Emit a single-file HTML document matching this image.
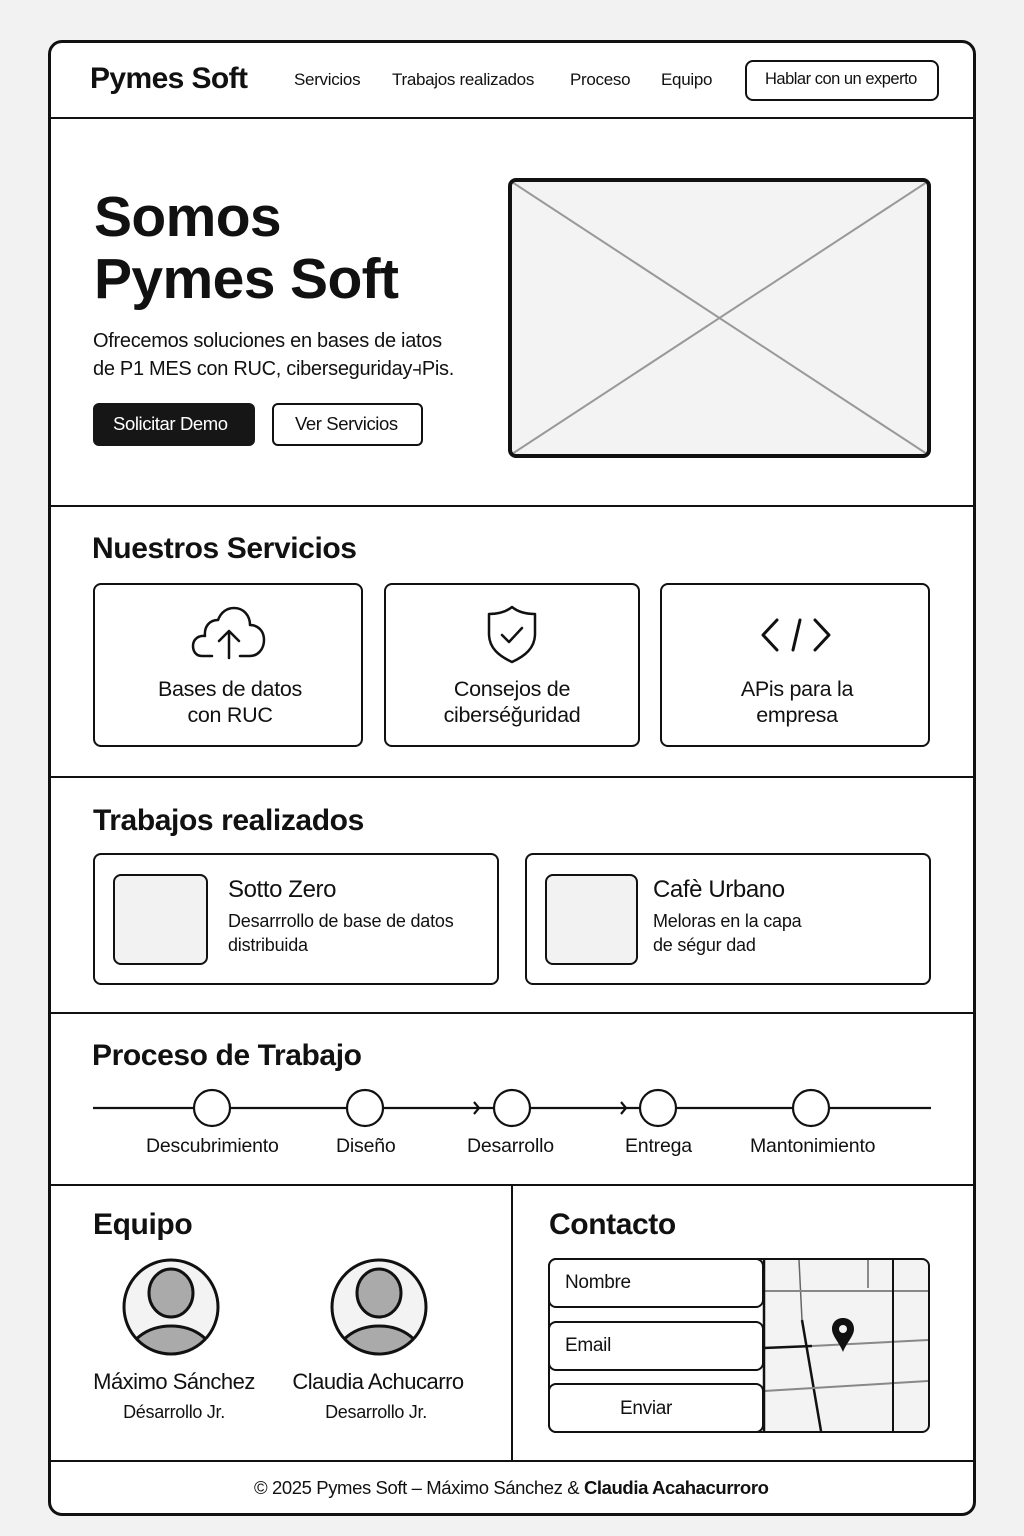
<!DOCTYPE html>
<html><head><meta charset="utf-8"><style>
*{margin:0;padding:0;box-sizing:border-box}
body{width:1024px;height:1536px;background:#f2f2f2;font-family:"Liberation Sans",sans-serif;color:#111;position:relative;overflow:hidden}
.a{position:absolute}
.frame{left:48px;top:40px;width:928px;height:1476px;border:3px solid #111;border-radius:14px;background:#fff}
.hl{position:absolute;left:48px;width:928px;height:2px;background:#111}
.t{position:absolute;white-space:nowrap;letter-spacing:-0.3px}
.box{position:absolute;border:2px solid #111;border-radius:8px;background:#fff}
.c{text-align:center}
.h{font-size:30px;font-weight:bold;letter-spacing:-0.4px}
</style></head><body>
<div class="a frame"></div>
<div class="hl" style="top:117px"></div>
<div class="hl" style="top:505px"></div>
<div class="hl" style="top:776px"></div>
<div class="hl" style="top:1012px"></div>
<div class="hl" style="top:1184px"></div>
<div class="hl" style="top:1460px"></div>
<div class="a" style="left:511px;top:1185px;width:2px;height:276px;background:#111"></div>

<!-- header -->
<div class="t" style="left:90px;top:62px;font-size:30px;font-weight:bold;letter-spacing:-0.6px">Pymes Soft</div>
<div class="t" style="left:294px;top:70px;font-size:17px">Servicios</div>
<div class="t" style="left:392px;top:70px;font-size:17px">Trabajos realizados</div>
<div class="t" style="left:570px;top:70px;font-size:17px">Proceso</div>
<div class="t" style="left:661px;top:70px;font-size:17px">Equipo</div>
<div class="box" style="left:745px;top:60px;width:194px;height:41px;border-radius:8px"></div>
<div class="t" style="left:765px;top:70px;font-size:16.5px;letter-spacing:-0.5px">Hablar con un experto</div>

<!-- hero -->
<div class="t" style="left:94px;top:186px;font-size:57px;font-weight:bold;letter-spacing:-0.6px;line-height:62px">Somos<br>Pymes Soft</div>
<div class="t" style="left:93px;top:327px;font-size:20px;line-height:28px;letter-spacing:-0.3px">Ofrecemos soluciones en bases de iatos<br>de P1 MES con RUC, ciberseguriday⫞Pis.</div>
<div class="a" style="left:93px;top:403px;width:162px;height:43px;background:#161616;border-radius:6px"></div>
<div class="t" style="left:113px;top:413px;font-size:18.5px;color:#fff;letter-spacing:-0.4px">Solicitar Demo</div>
<div class="box" style="left:272px;top:403px;width:151px;height:43px;border-radius:6px"></div>
<div class="t" style="left:295px;top:413px;font-size:18.5px;letter-spacing:-0.4px">Ver Servicios</div>
<div class="a" style="left:508px;top:178px;width:423px;height:280px;border:4px solid #111;border-radius:8px;background:#f3f3f3;overflow:hidden">
<svg width="415" height="272" style="position:absolute;left:0;top:0"><line x1="0" y1="0" x2="415" y2="272" stroke="#999" stroke-width="2"/><line x1="415" y1="0" x2="0" y2="272" stroke="#999" stroke-width="2"/></svg></div>

<!-- servicios -->
<div class="t h" style="left:92px;top:532px">Nuestros Servicios</div>
<div class="box" style="left:93px;top:583px;width:270px;height:164px"></div>
<div class="box" style="left:384px;top:583px;width:256px;height:164px"></div>
<div class="box" style="left:660px;top:583px;width:270px;height:164px"></div>
<svg class="a" style="left:190px;top:604px" width="78" height="56" viewBox="0 0 78 56" fill="none" stroke="#111" stroke-width="2.5" stroke-linejoin="round" stroke-linecap="round"><path d="M22 52 H12 C5 52 3 46 3 42 C3 35 9 31 15 32 C14 22 20 16 28 16 C31 8 37 4 44 4 C54 4 60 12 60 21 C68 21 74 27 74 36 C74 45 68 52 60 52 H50"/><path d="M39 54 V28 M29 37 L39 27 L49 37"/></svg>
<svg class="a" style="left:486px;top:604px" width="52" height="60" viewBox="0 0 52 60" fill="none" stroke="#111" stroke-width="2.5" stroke-linejoin="round" stroke-linecap="round"><path d="M26 3 C20 8 12 10 3 10 V30 C3 44 13 52 26 58 C39 52 49 44 49 30 V10 C40 10 32 8 26 3 Z"/><path d="M16 31 L23 38 L36 24"/></svg>
<svg class="a" style="left:760px;top:616px" width="72" height="40" viewBox="0 0 72 40" fill="none" stroke="#111" stroke-width="3" stroke-linecap="round" stroke-linejoin="round"><path d="M17 4 L3 19 L17 34"/><path d="M55 4 L69 19 L55 34"/><path d="M40 4 L33 34"/></svg>
<div class="t c" style="left:93px;top:676px;width:274px;font-size:21.5px;line-height:26px;letter-spacing:-0.3px">Bases de datos<br>con RUC</div>
<div class="t c" style="left:384px;top:676px;width:256px;font-size:21.5px;line-height:26px;letter-spacing:-0.3px">Consejos de<br>ciberséğuridad</div>
<div class="t c" style="left:662px;top:676px;width:270px;font-size:21.5px;line-height:26px;letter-spacing:-0.3px">APis para la<br>empresa</div>

<!-- trabajos -->
<div class="t h" style="left:93px;top:804px">Trabajos realizados</div>
<div class="box" style="left:93px;top:853px;width:406px;height:132px"></div>
<div class="box" style="left:525px;top:853px;width:406px;height:132px"></div>
<div class="box" style="left:113px;top:874px;width:95px;height:91px;background:#f2f2f2"></div>
<div class="box" style="left:545px;top:874px;width:93px;height:91px;background:#f2f2f2"></div>
<div class="t" style="left:228px;top:876px;font-size:24px;letter-spacing:-0.4px">Sotto Zero</div>
<div class="t" style="left:228px;top:909px;font-size:18px;line-height:24px;letter-spacing:-0.2px">Desarrrollo de base de datos<br>distribuida</div>
<div class="t" style="left:653px;top:876px;font-size:24px;letter-spacing:-0.4px">Cafè Urbano</div>
<div class="t" style="left:653px;top:909px;font-size:18px;line-height:24px;letter-spacing:-0.2px">Meloras en la capa<br>de ségur dad</div>

<!-- proceso -->
<div class="t h" style="left:92px;top:1039px">Proceso de Trabajo</div>
<svg class="a" style="left:90px;top:1088px" width="845" height="42" fill="none" stroke="#111" stroke-width="2.2">
<line x1="3" y1="20" x2="841" y2="20"/>
<path d="M384 14 L389 20 L384 26 M531 14 L536 20 L531 26"/>
<circle cx="122" cy="20" r="18" fill="#fff"/><circle cx="275" cy="20" r="18" fill="#fff"/><circle cx="422" cy="20" r="18" fill="#fff"/><circle cx="568" cy="20" r="18" fill="#fff"/><circle cx="721" cy="20" r="18" fill="#fff"/></svg>
<div class="t" style="left:146px;top:1135px;font-size:19.5px;letter-spacing:-0.2px">Descubrimiento</div>
<div class="t" style="left:336px;top:1135px;font-size:19.5px;letter-spacing:-0.2px">Diseño</div>
<div class="t" style="left:467px;top:1135px;font-size:19.5px;letter-spacing:-0.2px">Desarrollo</div>
<div class="t" style="left:625px;top:1135px;font-size:19.5px;letter-spacing:-0.2px">Entrega</div>
<div class="t" style="left:750px;top:1135px;font-size:19.5px;letter-spacing:-0.2px">Mantonimiento</div>

<!-- equipo -->
<div class="t h" style="left:93px;top:1208px">Equipo</div>
<svg class="a" style="left:120px;top:1256px" width="102" height="102"><defs><clipPath id="c1"><circle cx="51" cy="51" r="47"/></clipPath></defs><circle cx="51" cy="51" r="47" fill="#f3f3f3"/><g clip-path="url(#c1)"><ellipse cx="51" cy="104" rx="44" ry="34" fill="#aaa" stroke="#111" stroke-width="3"/></g><ellipse cx="51" cy="37" rx="22" ry="24" fill="#aaa" stroke="#111" stroke-width="3"/><circle cx="51" cy="51" r="47" fill="none" stroke="#111" stroke-width="3"/></svg>
<svg class="a" style="left:328px;top:1256px" width="102" height="102"><defs><clipPath id="c2"><circle cx="51" cy="51" r="47"/></clipPath></defs><circle cx="51" cy="51" r="47" fill="#f3f3f3"/><g clip-path="url(#c2)"><ellipse cx="51" cy="104" rx="44" ry="34" fill="#aaa" stroke="#111" stroke-width="3"/></g><ellipse cx="51" cy="37" rx="22" ry="24" fill="#aaa" stroke="#111" stroke-width="3"/><circle cx="51" cy="51" r="47" fill="none" stroke="#111" stroke-width="3"/></svg>
<div class="t c" style="left:74px;top:1369px;width:200px;font-size:22px;letter-spacing:-0.5px">Máximo Sánchez</div>
<div class="t c" style="left:74px;top:1402px;width:200px;font-size:18px;letter-spacing:-0.3px">Désarrollo Jr.</div>
<div class="t c" style="left:278px;top:1369px;width:200px;font-size:22px;letter-spacing:-0.5px">Claudia Achucarro</div>
<div class="t c" style="left:276px;top:1402px;width:200px;font-size:18px;letter-spacing:-0.3px">Desarrollo Jr.</div>

<!-- contacto -->
<div class="t h" style="left:549px;top:1208px">Contacto</div>
<div class="box" style="left:548px;top:1258px;width:382px;height:175px;border-radius:8px;overflow:hidden;background:#f3f3f3">
<svg width="378" height="171" style="position:absolute;left:0;top:0">
<rect x="0" y="0" width="214" height="171" fill="#fff"/>
<line x1="249" y1="0" x2="252" y2="60" stroke="#666" stroke-width="1.5"/>
<line x1="252" y1="60" x2="271" y2="171" stroke="#111" stroke-width="2.5"/>
<line x1="318" y1="0" x2="318" y2="28" stroke="#666" stroke-width="1.5"/>
<line x1="214" y1="31" x2="378" y2="31" stroke="#888" stroke-width="2"/>
<line x1="214" y1="88" x2="262" y2="86" stroke="#111" stroke-width="2.5"/>
<line x1="262" y1="86" x2="378" y2="80" stroke="#888" stroke-width="2"/>
<line x1="214" y1="131" x2="378" y2="121" stroke="#888" stroke-width="2"/>
<line x1="343" y1="0" x2="343" y2="171" stroke="#111" stroke-width="2"/>
<path d="M293 58 C286 58 282 63 282 69 C282 76 289 82 293 92 C297 82 304 76 304 69 C304 63 300 58 293 58 Z" fill="#111"/><circle cx="293" cy="69" r="4" fill="#f3f3f3"/>
<line x1="214" y1="0" x2="214" y2="171" stroke="#111" stroke-width="2.5"/>
</svg></div>
<div class="box" style="left:548px;top:1258px;width:216px;height:50px;border-radius:8px"></div>
<div class="box" style="left:548px;top:1321px;width:216px;height:50px;border-radius:8px"></div>
<div class="box" style="left:548px;top:1383px;width:216px;height:50px;border-radius:8px"></div>
<div class="t" style="left:565px;top:1272px;font-size:19px;letter-spacing:-0.3px">Nombre</div>
<div class="t" style="left:565px;top:1335px;font-size:19px;letter-spacing:-0.3px">Email</div>
<div class="t" style="left:620px;top:1398px;font-size:19px;letter-spacing:-0.3px">Enviar</div>

<!-- footer -->
<div class="t" style="left:254px;top:1477px;font-size:18.5px;letter-spacing:-0.4px">© 2025 Pymes Soft – Máximo Sánchez &amp; <b>Claudia Acahacurroro</b></div>
</body></html>
